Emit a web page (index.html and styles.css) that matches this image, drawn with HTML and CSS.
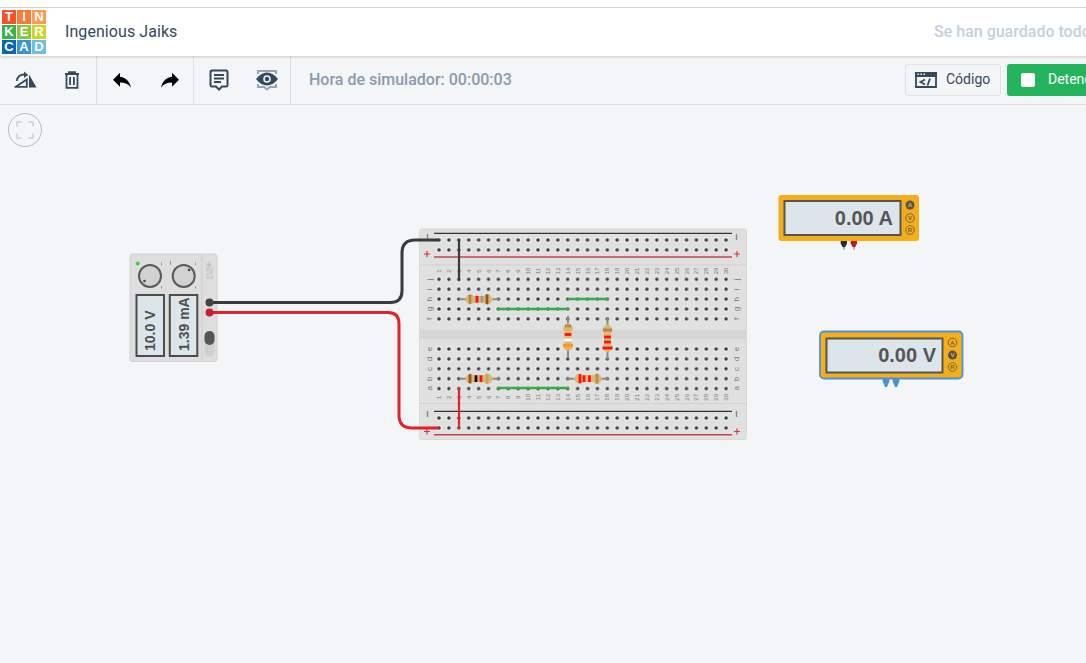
FILE: index.html
```html
<!DOCTYPE html>
<html lang="es">
<head>
<meta charset="utf-8">
<title>Ingenious Jaiks</title>
<link rel="stylesheet" href="styles.css">
</head>
<body>
<div class="app">
  <div class="topstrip"></div>
  <header class="header">
    <div class="logo">
      <span class="t1">T</span><span class="t2">I</span><span class="t3">N</span>
      <span class="t4">K</span><span class="t5">E</span><span class="t6">R</span>
      <span class="t7">C</span><span class="t8">A</span><span class="t9">D</span>
    </div>
    <div class="title">Ingenious Jaiks</div>
    <div class="saved">Se han guardado todos los cambios</div>
  </header>
  <nav class="toolbar">
    <div class="group g1">
      <svg class="ic" width="24" height="20" viewBox="0 0 24 20">
        <path class="fill-navy" d="M16 17.500V4.500L23.500 17.500Z"/>
        <path class="stroke-navy" d="M1.500 16.800H13.800V9.500L2.800 16.800" />
        <path class="stroke-navy" d="M3.800 11C4 6.800 7.600 4 12 4.600"/>
        <path class="fill-navy" d="M11 1.500L15.200 5 11 8Z"/>
      </svg>
      <svg class="ic" width="16" height="18" viewBox="0 0 16 18">
        <path class="stroke-navy" d="M1 3H15M5 3V1.200H11V3M2.500 3V16.800H13.500V3"/>
        <path class="fill-navy" d="M5.200 6H7V14H5.200ZM9 6H10.800V14H9Z"/>
      </svg>
    </div>
    <div class="group g2">
      <svg class="ic" width="18" height="16" viewBox="3 4.800 18 15"><path d="M10 9V5l-7 7 7 7v-4.100c5 0 8.500 1.600 11 5.100-1-5-4-10-11-11z"/></svg>
      <svg class="ic" width="18" height="16" viewBox="3 4.800 18 15"><path d="M14 9V5l7 7-7 7v-4.100c-5 0-8.500 1.600-11 5.100 1-5 4-10 11-11z"/></svg>
    </div>
    <div class="group g3">
      <svg class="ic" width="20" height="22" viewBox="0 0 20 22">
        <path class="stroke-navy2" d="M3 1.500H17Q18.500 1.500 18.500 3V16Q18.500 17.500 17 17.500H13L10 20.500 7 17.500H3Q1.500 17.500 1.500 16V3Q1.500 1.500 3 1.500Z"/>
        <path class="stroke-navy" d="M5 6H15M5 9.500H15M5 13H12"/>
      </svg>
      <svg class="ic" width="24" height="22" viewBox="0 0 24 22">
        <path class="stroke-grey" d="M3 5V2H21V5M3 15V18H9L12 20.500 15 18H21V15"/>
        <path class="fill-navy" fill-rule="evenodd" d="M1 10Q6 3.500 12 3.500T23 10Q18 16.500 12 16.500T1 10ZM12 6.200A3.800 3.800 0 1 0 12 13.800 3.800 3.800 0 1 0 12 6.200Z"/>
        <circle class="fill-navy" cx="12" cy="10" r="2.200"/>
      </svg>
    </div>
    <div class="timer">Hora de simulador: 00:00:03</div>
    <div class="actions">
      <button class="btn-code">
        <svg width="22" height="16" viewBox="0 0 22 16">
          <path class="fill-navy" d="M0 0H22V5H0Z"/>
          <path class="stroke-navy" d="M1 1H21V15H1Z"/>
          <path class="dots" d="M2.500 1.500H4V3H2.500ZM5.500 1.500H7V3H5.500ZM8.500 1.500H10V3H8.500Z"/>
          <path class="stroke-navy" d="M10 7.500L5.500 10 10 12.500M15 6.500L12.500 13.500"/>
        </svg>
        <span class="btn-label">Código</span>
      </button>
      <button class="btn-stop"><span class="square"></span><span class="btn-label">Detener</span></button>
    </div>
  </nav>
  <main class="canvas">
    <button class="fit" aria-label="Ajustar">
      <svg width="18" height="18" viewBox="0 0 18 18"><path d="M1 5.500V1H5.500M12.500 1H17V5.500M17 12.500V17H12.500M5.500 17H1V12.500"/></svg>
    </button>
    <svg class="scene" width="1086" height="558" viewBox="0 105 1086 558">
      <defs>
        <pattern id="holes" width="9.9" height="9.9" patternUnits="userSpaceOnUse">
          <circle cx="4.950" cy="4.950" r="3" fill="#ececec"/>
          <circle cx="4.950" cy="4.950" r="1.800" fill="#3a3a3a"/>
        </pattern>
        <path id="rbody" d="M-14 0Q-12.500-4.500-8.500-5.200L-5-3.400H5L8.500-5.200Q12.500-4.500 14 0 12.500 4.500 8.500 5.200L5 3.400H-5L-8.500 5.200Q-12.500 4.500-14 0Z"/>
      </defs>

      <!-- breadboard -->
      <g class="board">
        <rect class="bb" x="419.500" y="229" width="327" height="210.500" rx="2"/>
        <rect class="bb-groove" x="420" y="330" width="326" height="9"/>
        <path class="bb-sep" d="M420 265H746M420 403.500H746"/>
        <path class="rail-b" d="M434 233.300H732M434 411.300H732"/>
        <path class="rail-r" d="M434 257H732M434 434.700H732"/>
        <path class="sign-b" d="M427.500 234V240M427.500 411V417M736.500 234V240M736.500 411V417"/>
        <path class="sign-r" d="M424 254H430M427 251V257M734 254H740M737 251V257M424 431.500H430M427 428.500V434.500M734 431.500H740M737 428.500V434.500"/>
        <g transform="translate(434.050 235.050)"><rect width="297" height="19.800" fill="url(#holes)"/></g>
        <g transform="translate(434.050 274.350)"><rect width="297" height="49.500" fill="url(#holes)"/></g>
        <g transform="translate(434.050 344.050)"><rect width="297" height="49.500" fill="url(#holes)"/></g>
        <g transform="translate(434.050 413.050)"><rect width="297" height="19.800" fill="url(#holes)"/></g>

        <g id="nums" class="bb-num">
          <text transform="translate(439 271) rotate(-90)">1</text>
          <text transform="translate(448.900 271) rotate(-90)">2</text>
          <text transform="translate(458.800 271) rotate(-90)">3</text>
          <text transform="translate(468.700 271) rotate(-90)">4</text>
          <text transform="translate(478.600 271) rotate(-90)">5</text>
          <text transform="translate(488.500 271) rotate(-90)">6</text>
          <text transform="translate(498.400 271) rotate(-90)">7</text>
          <text transform="translate(508.300 271) rotate(-90)">8</text>
          <text transform="translate(518.200 271) rotate(-90)">9</text>
          <text transform="translate(528.100 271) rotate(-90)">10</text>
          <text transform="translate(538 271) rotate(-90)">11</text>
          <text transform="translate(547.900 271) rotate(-90)">12</text>
          <text transform="translate(557.800 271) rotate(-90)">13</text>
          <text transform="translate(567.700 271) rotate(-90)">14</text>
          <text transform="translate(577.600 271) rotate(-90)">15</text>
          <text transform="translate(587.500 271) rotate(-90)">16</text>
          <text transform="translate(597.400 271) rotate(-90)">17</text>
          <text transform="translate(607.300 271) rotate(-90)">18</text>
          <text transform="translate(617.200 271) rotate(-90)">19</text>
          <text transform="translate(627.100 271) rotate(-90)">20</text>
          <text transform="translate(637 271) rotate(-90)">21</text>
          <text transform="translate(646.900 271) rotate(-90)">22</text>
          <text transform="translate(656.800 271) rotate(-90)">23</text>
          <text transform="translate(666.700 271) rotate(-90)">24</text>
          <text transform="translate(676.600 271) rotate(-90)">25</text>
          <text transform="translate(686.500 271) rotate(-90)">26</text>
          <text transform="translate(696.400 271) rotate(-90)">27</text>
          <text transform="translate(706.300 271) rotate(-90)">28</text>
          <text transform="translate(716.200 271) rotate(-90)">29</text>
          <text transform="translate(726.100 271) rotate(-90)">30</text>
        </g>
        <use href="#nums" y="126.300"/>
        <g id="letters" class="bb-num letters">
          <text transform="translate(429 279.300) rotate(-90)">j</text>
          <text transform="translate(429 289.300) rotate(-90)">i</text>
          <text transform="translate(429 299.300) rotate(-90)">h</text>
          <text transform="translate(429 309) rotate(-90)">g</text>
          <text transform="translate(429 319) rotate(-90)">f</text>
          <text transform="translate(429 349) rotate(-90)">e</text>
          <text transform="translate(429 359) rotate(-90)">d</text>
          <text transform="translate(429 369) rotate(-90)">c</text>
          <text transform="translate(429 378.700) rotate(-90)">b</text>
          <text transform="translate(429 388.300) rotate(-90)">a</text>
        </g>
        <use href="#letters" x="307.500"/>
      </g>

      <!-- jumpers -->
      <path class="w-green" d="M497.500 309H569M567.500 299H609M497.500 388H569"/>

      <!-- resistors -->
      <g class="res" transform="translate(479 299.300)">
        <path class="lead" d="M-20 0H20"/><use href="#rbody" class="rb"/>
        <path class="band" stroke="#a88a4a" d="M-9 -4.500V4.500"/><path class="band" stroke="#ff1010" d="M-2-3.400V3.400"/><path class="band" stroke="#9a9a9a" d="M3-3.400V3.400"/><path class="band" stroke="#8a5a20" d="M8-5V5"/>
      </g>
      <g class="res" transform="translate(479 378.700)">
        <path class="lead" d="M-20 0H20"/><use href="#rbody" class="rb"/>
        <path class="band" stroke="#8a5a20" d="M-9-4.500V4.500"/><path class="band" stroke="#111" d="M-3-3.400V3.400"/><path class="band" stroke="#ff1010" d="M2-3.400V3.400"/><path class="band" stroke="#c9a45e" d="M8-5V5"/>
      </g>
      <g class="res" transform="translate(588 378.700)">
        <path class="lead" d="M-21 0H20"/><use href="#rbody" class="rb"/>
        <path class="band" stroke="#ff1010" d="M-8-4.500V4.500"/><path class="band" stroke="#ff1010" d="M-4-3.400V3.400"/><path class="band" stroke="#ff1010" d="M1.500-3.400V3.400"/><path class="band" stroke="#b09050" d="M9-5V5"/>
      </g>
      <g class="res" transform="translate(568 337) rotate(90)">
        <path class="lead" d="M-21 0H21"/><use href="#rbody" class="rb"/>
        <path class="band" stroke="#b09050" d="M-11-3V3"/><path class="band" stroke="#ff1010" d="M-2.500-3.400V3.400"/><path class="band" stroke="#ffffff" d="M3-3.400V3.400"/><path class="band wide" stroke="#ff9a10" d="M8.500-5V5"/>
      </g>
      <g class="res" transform="translate(607.500 338.500) rotate(90)">
        <path class="lead" d="M-21 0H21"/><use href="#rbody" class="rb"/>
        <path class="band" stroke="#a88a4a" d="M-8.500-4.500V4.500"/><path class="band" stroke="#ff1010" d="M-1.500-3.400V3.400"/><path class="band" stroke="#ff1010" d="M3.500-3.400V3.400"/><path class="band" stroke="#ff1010" d="M9.500-5V5"/>
      </g>

      <!-- power supply -->
      <g class="psu">
        <rect class="psu-body" x="130" y="254" width="87" height="107.500" rx="2"/>
        <path class="psu-div" d="M202 254V361"/>
        <circle class="led" cx="137.700" cy="263.500" r="2"/>
        <circle class="knob" cx="150" cy="276" r="11"/>
        <circle class="knob-dot" cx="144.500" cy="281" r="1.300"/>
        <circle class="knob" cx="183.700" cy="276" r="11"/>
        <circle class="knob-dot" cx="189" cy="270" r="1.300"/>
        <path class="knob-tick" d="M161.500 262.500V265M161.500 286V288.500M195.500 262.500V265M195.500 286V288.500M170.500 261V265"/>
        <rect class="psu-lcd" x="136.500" y="295" width="27.500" height="61"/>
        <rect class="psu-lcd" x="169.800" y="295" width="27.500" height="61"/>
        <text class="psu-txt" transform="translate(155 351) rotate(-90)">10.0 V</text>
        <text class="psu-txt" transform="translate(188.500 351) rotate(-90)">1.39 mA</text>
        <text class="psu-tiny" transform="translate(209 279) rotate(-90)">VOLTAGE</text>
        <text class="psu-tiny" transform="translate(213 279) rotate(-90)">SUPPLY</text>
        <path class="psu-bolt" d="M211 260L207 265H209.500L207.500 269 211.500 264H209Z"/>
        <rect class="switch-bg" x="204.500" y="331" width="10" height="26" rx="5"/>
        <rect class="switch" x="204.500" y="331" width="10" height="14" rx="5"/>
      </g>

      <!-- wires -->
      <path class="w-black" d="M209 302.500H390Q402 302.500 402 291V253Q402 240 415 240H439"/>
      <path class="w-red" d="M209 312.500H388Q399 312.500 399 324V415Q399 428 412 428H439"/>
      <path class="w-black thin" d="M459 240V281"/>
      <path class="w-red thin" d="M459 388V429"/>
      <circle class="t-black" cx="209.500" cy="302.500" r="4"/>
      <circle class="t-red" cx="209.500" cy="312.500" r="4"/>

      <!-- ammeter -->
      <g>
        <path class="p-tip" d="M843 246H845L844.500 250H843.500ZM853 246H855L854.500 250H853.500Z"/>
        <path class="p-black" d="M840.700 241H847V243.500L845.200 247H842.500L840.700 243.500Z"/>
        <path class="p-red" d="M850.700 241H857V243.500L855.200 247H852.500L850.700 243.500Z"/>
        <rect class="mm" x="778.500" y="195" width="140.500" height="46" rx="3"/>
        <rect class="mm-lcd" x="784.500" y="201" width="116" height="34"/>
        <text class="mm-txt" x="893" y="225">0.00 A</text>
        <circle class="mm-on" cx="910" cy="205" r="4.500"/><text class="mm-l on" x="910" y="205">A</text>
        <circle class="mm-off" cx="910" cy="218" r="4.300"/><text class="mm-l" x="910" y="218">V</text>
        <circle class="mm-off" cx="910" cy="230" r="4.300"/><text class="mm-l" x="910" y="230">R</text>
      </g>

      <!-- voltmeter, selected -->
      <g>
        <path class="p-blue" d="M882.700 379H889.300V381.500L887 387H885L882.700 381.500Z"/>
        <path class="p-blue" d="M892.700 379H899.300V381.500L897 387H895L892.700 381.500Z"/>
        <rect class="mm sel" x="820" y="331.500" width="142.500" height="47" rx="4"/>
        <rect class="mm-lcd" x="826.500" y="338.500" width="116" height="34"/>
        <text class="mm-txt" x="936" y="362">0.00 V</text>
        <circle class="mm-off" cx="952.500" cy="342.500" r="4.300"/><text class="mm-l" x="952.500" y="342.500">A</text>
        <circle class="mm-on" cx="952.500" cy="355" r="4.500"/><text class="mm-l on" x="952.500" y="355">V</text>
        <circle class="mm-off" cx="952.500" cy="367" r="4.300"/><text class="mm-l" x="952.500" y="367">R</text>
      </g>
    </svg>
  </main>
</div>
</body>
</html>
```

FILE: styles.css
```css
html, body {
  margin: 0;
  height: 100%;
  overflow: hidden;
  background: #f3f5f7;
}

.app {
  width: 1190px;
  height: 663px;
  display: flex;
  flex-direction: column;
  font-family: Roboto, "Liberation Sans", sans-serif;
}

.topstrip {
  height: 7px;
  flex: none;
  background: #fff;
  border-bottom: 1px solid #dcdcdc;
}

.header {
  height: 48px;
  flex: none;
  display: flex;
  align-items: center;
  padding-left: 2px;
  background: #fff;
  box-shadow: 0 1px 3px rgba(0, 0, 0, 0.18);
  position: relative;
  z-index: 1;
}

.logo {
  width: 44px;
  height: 44px;
  display: grid;
  grid-template-columns: repeat(3, 14px);
  grid-template-rows: repeat(3, 14px);
  gap: 1px;
  font: bold 13px/14px "Liberation Sans", sans-serif;
  color: #fff;
  text-align: center;
}

.t1 { background: #f9512b; }
.t2 { background: #fb7a3a; }
.t3 { background: #fc9b54; }
.t4 { background: #37b34a; }
.t5 { background: #8cc63f; }
.t6 { background: #cdd52b; }
.t7 { background: #0b67b0; }
.t8 { background: #3a97d6; }
.t9 { background: #6ebde3; }

.title {
  margin-left: 19px;
  padding-bottom: 2px;
  font-size: 16px;
  letter-spacing: 0.07px;
  color: #34495e;
}

.saved {
  margin-left: auto;
  padding-bottom: 2px;
  width: 256px;
  white-space: nowrap;
  font-size: 16px;
  font-weight: 500;
  color: #c5d0dd;
}

.toolbar {
  height: 48px;
  flex: none;
  display: flex;
  align-items: stretch;
  border-bottom: 1px solid #dcdfe3;
  background: #f3f5f7;
}

.group {
  display: flex;
  align-items: center;
  border-right: 1px solid #dcdfe3;
  box-sizing: border-box;
  padding-bottom: 1px;
}

.g1 { width: 97px; padding-left: 13px; gap: 27px; }
.g2 { width: 97px; padding-left: 16px; gap: 30px; }
.g3 { width: 97px; padding-left: 15px; gap: 26px; }

.ic { display: block; flex: none; }

.fill-navy { fill: #34495e; }
.stroke-navy { fill: none; stroke: #34495e; stroke-width: 1.8; }
.stroke-navy2 { fill: none; stroke: #34495e; stroke-width: 2; }
.stroke-grey { fill: none; stroke: #9aa4ae; stroke-width: 2; }
.dots { fill: #f3f5f7; }

.timer {
  align-self: center;
  margin-left: 18px;
  margin-bottom: 1px;
  font-size: 16px;
  font-weight: 500;
  color: #8a9bae;
}

.actions {
  margin-left: auto;
  padding-bottom: 0;
  display: flex;
  align-items: center;
  gap: 6px;
}

.btn-code, .btn-stop {
  height: 32px;
  display: flex;
  align-items: center;
  box-sizing: border-box;
  padding: 0;
  border-radius: 3px;
  font: 14px Roboto, sans-serif;
}

.btn-label { margin-bottom: 2px; }

.btn-code {
  width: 96px;
  padding-left: 9px;
  gap: 9px;
  background: #f3f5f7;
  border: 1px solid #dfe2e6;
  color: #34495e;
}

.btn-stop {
  width: 183px;
  padding-left: 14px;
  gap: 13px;
  background: #25b45e;
  border: 0;
  color: #fff;
}

.square {
  width: 14px;
  height: 14px;
  border-radius: 2px;
  background: #fff;
}

.canvas {
  flex: 1;
  position: relative;
  background: #f3f5f7;
}

.fit {
  position: absolute;
  left: 8px;
  top: 8px;
  width: 34px;
  height: 34px;
  padding: 0;
  display: flex;
  align-items: center;
  justify-content: center;
  border: 1px solid #b9b9b9;
  border-radius: 50%;
  background: transparent;
}

.fit path {
  fill: none;
  stroke: #d6d9dc;
  stroke-width: 2;
}

.scene {
  display: block;
  font-family: "Liberation Sans", sans-serif;
}

.bb { fill: #e0e0e0; stroke: #d8d8d8; }
.bb-groove { fill: #d6d6d6; }
.bb-sep { stroke: #cfcfcf; fill: none; }
.rail-b { stroke: #333; stroke-width: 1.200; fill: none; }
.rail-r { stroke: #c0474b; stroke-width: 1.400; fill: none; }
.sign-b { stroke: #888; stroke-width: 1.400; fill: none; }
.sign-r { stroke: #d9363a; stroke-width: 1.200; fill: none; }
.bb-num text {
  font-size: 6px;
  fill: #777;
  text-anchor: middle;
  dominant-baseline: central;
}
.letters text { font-size: 8px; }

.w-green { stroke: #37ad48; stroke-width: 2.500; fill: none; }
.w-black { stroke: #3a3a3a; stroke-width: 3; fill: none; }
.w-red { stroke: #e3232b; stroke-width: 3; fill: none; }
.thin { stroke-width: 2.200; }
.t-black { fill: #444; }
.t-red { fill: #c8202a; }

.lead { stroke: #8a8a8a; stroke-width: 2; fill: none; }
.rb { fill: #dcb874; }
.band { stroke-width: 2.800; fill: none; }
.wide { stroke-width: 3; }

.psu-body { fill: #dedede; stroke: #d2d2d2; }
.psu-div { stroke: #cccccc; fill: none; }
.led { fill: #35d83a; }
.knob { fill: #d2d2d2; stroke: #5a5a5a; stroke-width: 2; }
.knob-dot { fill: #444; }
.knob-tick { stroke: #999; stroke-width: 1; fill: none; }
.psu-lcd { fill: #dce6ea; stroke: #4c4c4c; stroke-width: 2; }
.psu-txt { font-size: 14px; font-weight: bold; fill: #4f4f4f; }
.psu-tiny { font-size: 3.500px; fill: #aaa; text-anchor: start; }
.psu-bolt { fill: #bbb; }
.switch-bg { fill: #cfcfcf; }
.switch { fill: #555; }

.mm { fill: #f4ae1a; }
.sel { stroke: #4a92d8; stroke-width: 1.800; }
.mm-lcd { fill: #dce6ea; stroke: #555; stroke-width: 2; }
.mm-txt { font-size: 20px; font-weight: bold; fill: #555; text-anchor: end; }
.mm-on { fill: #555; }
.mm-off { fill: none; stroke: #555; stroke-width: 0.800; }
.mm-l {
  font-size: 6px;
  font-weight: bold;
  fill: #7a6020;
  text-anchor: middle;
  dominant-baseline: central;
}
.mm-l.on { fill: #f4ae1a; }
.p-black { fill: #2b2b2b; }
.p-red { fill: #b5201f; }
.p-blue { fill: #4a92d8; }
.p-tip { fill: #999; }
```
